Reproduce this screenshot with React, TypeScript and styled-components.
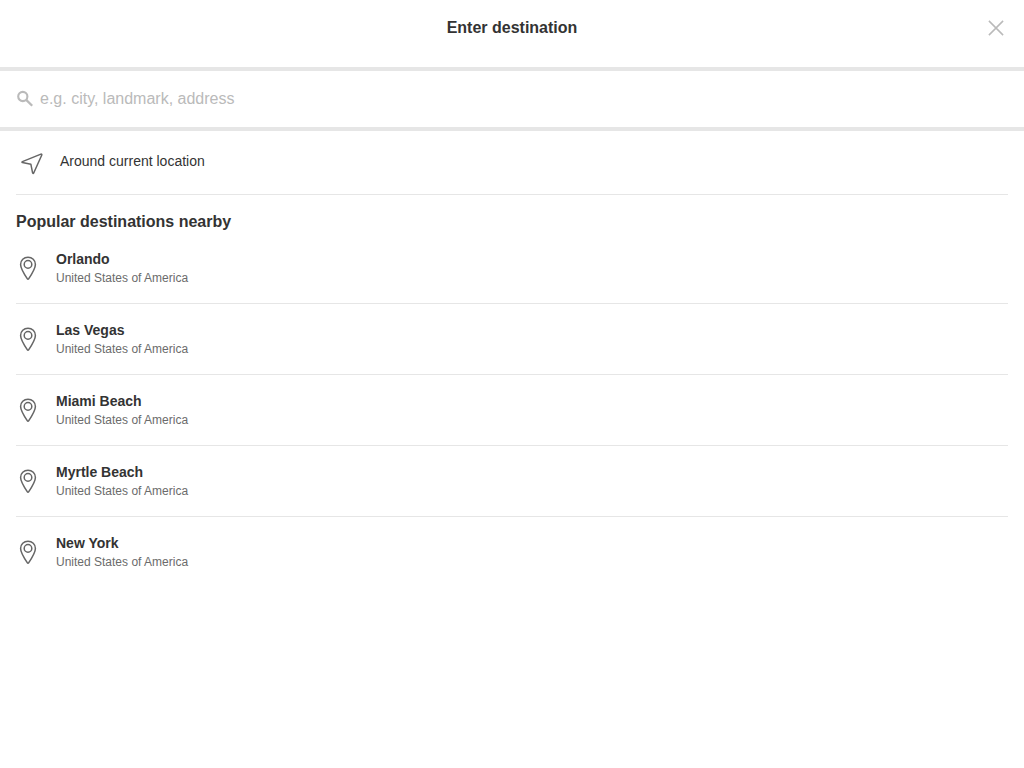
import React from "react";
import styled, { createGlobalStyle } from "styled-components";

const GlobalStyle = createGlobalStyle`
  *, *::before, *::after { box-sizing: border-box; }
  body {
    margin: 0;
    background: #fff;
    color: #333;
    font-family: "Liberation Sans", Arial, Helvetica, sans-serif;
  }
`;

const Header = styled.header`
  display: grid;
  grid-template-columns: 1fr auto 1fr;
  align-items: start;
  min-height: 71px;
  padding: 16px;
  border-bottom: 4px solid #e6e6e6;
`;

const Title = styled.h1`
  grid-column: 2;
  margin: 0;
  font-size: 16px;
  line-height: 24px;
`;

const CloseButton = styled.button`
  display: flex;
  justify-self: end;
  padding: 0;
  border: 0;
  background: none;
  color: #bababa;
  cursor: pointer;
`;

const SearchBar = styled.label`
  display: flex;
  align-items: center;
  height: 60px;
  padding: 0 16px;
  border-bottom: 4px solid #e6e6e6;
  color: #bababa;
`;

const SearchInput = styled.input`
  flex: 1;
  min-width: 0;
  height: 24px;
  padding: 0;
  border: 0;
  outline: 0;
  background: none;
  color: #333;
  font: inherit;
  font-size: 16px;

  &::placeholder {
    color: #bababa;
    opacity: 1;
  }
`;

const Content = styled.main`
  padding: 0 16px;
`;

const LocationButton = styled.button`
  display: flex;
  align-items: flex-start;
  gap: 16px;
  width: 100%;
  min-height: 64px;
  padding: 20px 4px 0;
  border: 0;
  border-bottom: 1px solid #e6e6e6;
  background: none;
  color: #333;
  font: inherit;
  font-size: 14px;
  line-height: 20px;
  text-align: left;
  cursor: pointer;
`;

const SectionTitle = styled.h2`
  margin: 0;
  padding-top: 16px;
  font-size: 16px;
  line-height: 22px;
`;

const DestinationList = styled.ul`
  margin: 0;
  padding: 0;
  list-style: none;
`;

const DestinationItem = styled.li`
  & + & {
    border-top: 1px solid #e6e6e6;
  }
`;

const DestinationButton = styled.button`
  display: flex;
  align-items: center;
  gap: 16px;
  width: 100%;
  padding: 16px 0;
  border: 0;
  background: none;
  color: #333;
  font: inherit;
  text-align: left;
  cursor: pointer;
`;

const City = styled.span`
  display: block;
  font-size: 14px;
  font-weight: 700;
  line-height: 20px;
`;

const Country = styled.span`
  display: block;
  color: #6b6b6b;
  font-size: 12px;
  line-height: 18px;
`;

const Icon = styled.svg.attrs({
  viewBox: "0 0 24 24",
  width: 24,
  height: 24,
  fill: "none",
  stroke: "currentColor",
  "aria-hidden": true,
})`
  flex: none;
  display: block;
`;

const DarkIcon = styled(Icon)`
  color: #666;
`;

const destinations = ["Orlando", "Las Vegas", "Miami Beach", "Myrtle Beach", "New York"];

export default function App() {
  return (
    <>
      <GlobalStyle />
      <Header>
        <Title>Enter destination</Title>
        <CloseButton type="button" aria-label="Close">
          <Icon strokeWidth="1.5">
            <path d="M4.9 4.9l14.2 14.2M19.1 4.9L4.9 19.1" />
          </Icon>
        </CloseButton>
      </Header>
      <SearchBar>
        <Icon>
          <circle cx="6.8" cy="9.5" r="4.6" strokeWidth="2.1" />
          <path d="M10.2 12.9l6 5.9" strokeWidth="2.3" />
        </Icon>
        <SearchInput
          type="text"
          aria-label="Destination"
          placeholder="e.g. city, landmark, address"
        />
      </SearchBar>
      <Content>
        <LocationButton type="button">
          <DarkIcon strokeWidth="1.5" strokeLinejoin="round">
            <path d="M20.9 3.1L2.4 10.6c-.6.3-.5.8 0 .9L10.9 13.3l1.7 8.6c.2.7.8.8 1.1.1L21.8 4c.2-.6-.2-1.1-.9-.9z" />
          </DarkIcon>
          <span>Around current location</span>
        </LocationButton>
        <SectionTitle>Popular destinations nearby</SectionTitle>
        <DestinationList>
          {destinations.map((city) => (
            <DestinationItem key={city}>
              <DestinationButton type="button">
                <DarkIcon strokeWidth="1.5">
                  <path d="M12 1.2c-4.2 0-7.4 3.2-7.4 7.2 0 3.6 4.1 10.4 6.8 14.4.3.5.9.5 1.2 0 2.7-4 6.8-10.8 6.8-14.4 0-4-3.2-7.2-7.4-7.2z" />
                  <circle cx="12" cy="8.4" r="3.8" />
                </DarkIcon>
                <span>
                  <City>{city}</City>
                  <Country>United States of America</Country>
                </span>
              </DestinationButton>
            </DestinationItem>
          ))}
        </DestinationList>
      </Content>
    </>
  );
}
